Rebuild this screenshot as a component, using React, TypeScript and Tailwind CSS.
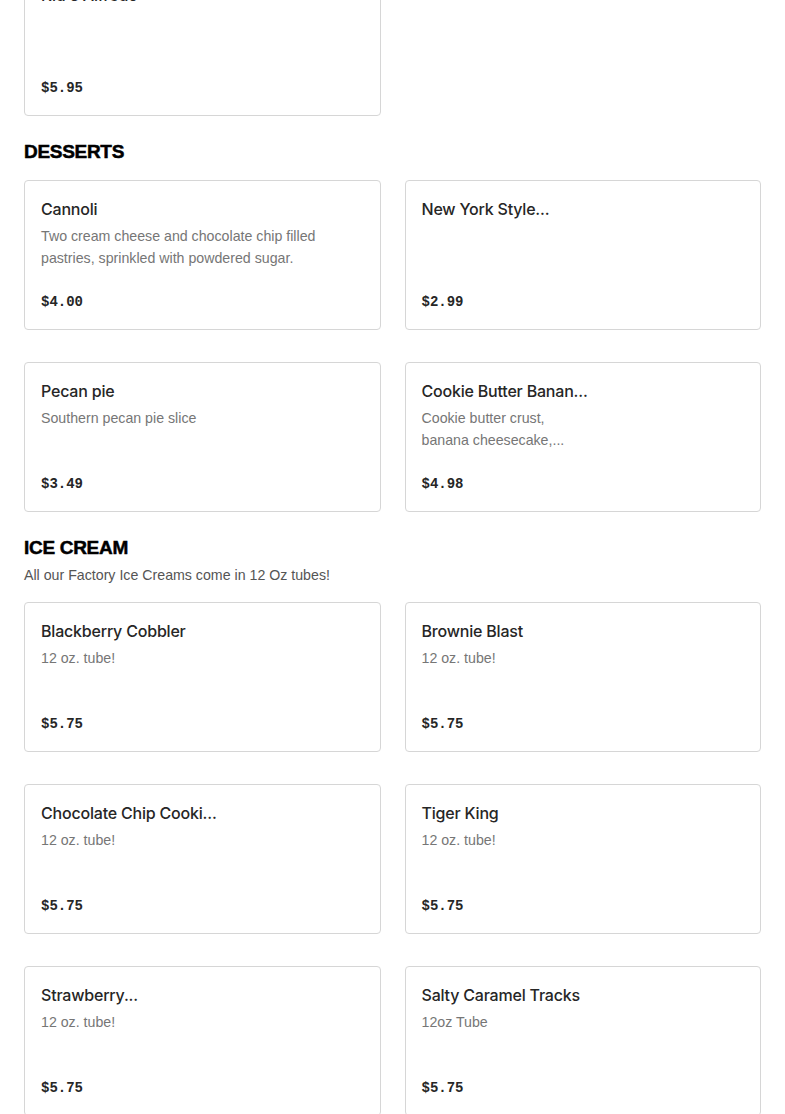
import React from 'react';

type Item = { name: string; desc?: string[]; price: string };

const desserts: Item[] = [
  { name: 'Cannoli', desc: ['Two cream cheese and chocolate chip filled', 'pastries, sprinkled with powdered sugar.'], price: '$4.00' },
  { name: 'New York Style...', price: '$2.99' },
  { name: 'Pecan pie', desc: ['Southern pecan pie slice'], price: '$3.49' },
  { name: 'Cookie Butter Banan...', desc: ['Cookie butter crust,', 'banana cheesecake,...'], price: '$4.98' },
];

const iceCream: Item[] = [
  { name: 'Blackberry Cobbler', desc: ['12 oz. tube!'], price: '$5.75' },
  { name: 'Brownie Blast', desc: ['12 oz. tube!'], price: '$5.75' },
  { name: 'Chocolate Chip Cooki...', desc: ['12 oz. tube!'], price: '$5.75' },
  { name: 'Tiger King', desc: ['12 oz. tube!'], price: '$5.75' },
  { name: 'Strawberry...', desc: ['12 oz. tube!'], price: '$5.75' },
  { name: 'Salty Caramel Tracks', desc: ['12oz Tube'], price: '$5.75' },
];

function ItemCard({ item }: { item: Item }) {
  return (
    <div className="h-[150px] flex flex-col border border-[#d6d6d6] rounded-[4px] bg-white px-4 pt-4 pb-[15px]">
      <div
        className="text-[16px] leading-[24px] font-medium text-[#262626] tracking-[-0.2px]"
        style={{ fontFamily: 'Inter, "Liberation Sans", sans-serif' }}
      >
        {item.name}
      </div>
      {item.desc && (
        <div className="mt-1 text-[14.2px] leading-[22px] text-[#767676]">
          {item.desc.map((l, i) => (
            <div key={i}>{l}</div>
          ))}
        </div>
      )}
      <div
        className="mt-auto text-[14px] leading-[24px] font-bold text-[#262626]"
        style={{ fontFamily: '"Liberation Mono", "DejaVu Sans Mono", monospace' }}
      >
        {item.price}
      </div>
    </div>
  );
}

function Grid({ items }: { items: Item[] }) {
  return (
    <div className="grid grid-cols-2 gap-x-6 gap-y-8">
      {items.map((it, i) => (
        <ItemCard key={i} item={it} />
      ))}
    </div>
  );
}

export default function App() {
  return (
    <div
      className="bg-white min-h-screen px-6 overflow-hidden"
      style={{ fontFamily: '"Liberation Sans", Arial, sans-serif' }}
    >
      <div className="mt-[-34px]">
        <Grid items={[{ name: "Kid's Alfredo", price: '$5.95' }]} />
      </div>

      <h2 className="mt-6 mb-4 text-[19px] leading-[24px] font-black text-black tracking-[-0.3px] [-webkit-text-stroke:0.5px_black]">
        DESSERTS
      </h2>
      <Grid items={desserts} />

      <h2 className="mt-6 text-[19px] leading-[24px] font-black text-black tracking-[-0.3px] [-webkit-text-stroke:0.5px_black]">
        ICE CREAM
      </h2>
      <p className="mt-1 mb-4 text-[14.2px] leading-[22px] text-[#555]">All our Factory Ice Creams come in 12 Oz tubes!</p>
      <Grid items={iceCream} />
      <div className="h-10" />
    </div>
  );
}
